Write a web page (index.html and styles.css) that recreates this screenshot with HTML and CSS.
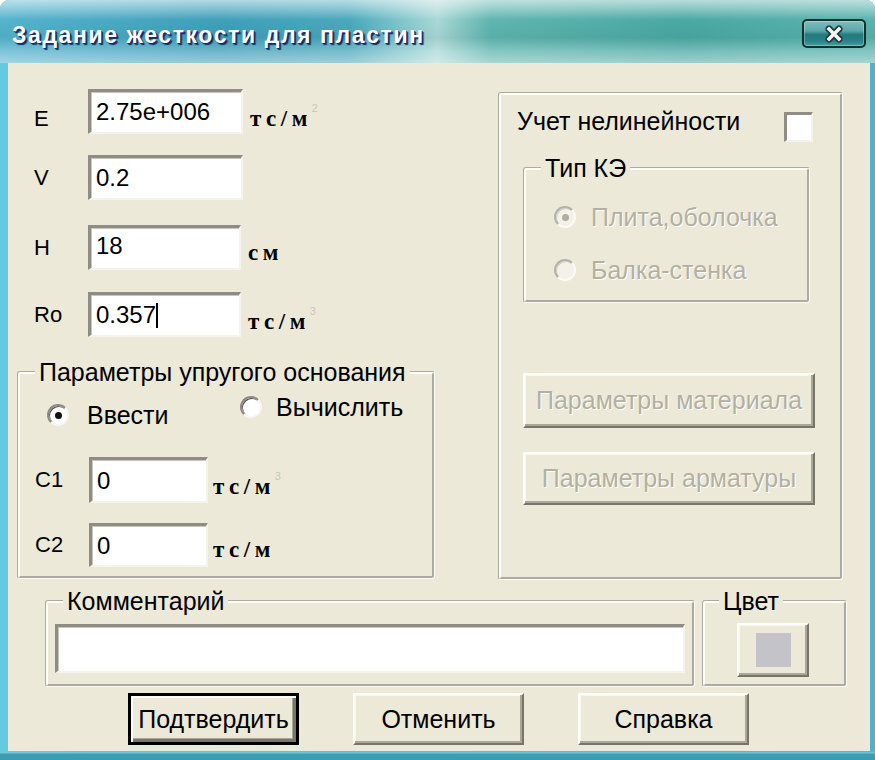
FILE: index.html
```html
<!DOCTYPE html>
<html lang="ru">
<head>
<meta charset="utf-8">
<title>Задание жесткости для пластин</title>
<link rel="stylesheet" href="styles.css">
</head>
<body>
<div class="window">
  <div class="titlebar">
    <span class="title">Задание жесткости для пластин</span>
    <div class="close">
      <svg width="22" height="18" viewBox="0 0 22 18">
        <path d="M6 4 L16 14 M16 4 L6 14" stroke="#1b3b3b" stroke-width="7" stroke-linecap="round"/>
        <path d="M6 4 L16 14 M16 4 L6 14" stroke="#f4f4f4" stroke-width="3.5" stroke-linecap="square"/>
      </svg>
    </div>
  </div>
  <div class="client">
    <div class="top">
      <div class="leftcol">
        <div class="field">
          <span class="lbl le">E</span>
          <div class="edit w155">2.75e+006</div>
          <span class="unit">тс/м<sup>2</sup></span>
        </div>
        <div class="field r2">
          <span class="lbl">V</span>
          <div class="edit w155">0.2</div>
        </div>
        <div class="field r3">
          <span class="lbl">H</span>
          <div class="edit w152 hi">18</div>
          <span class="unit">см</span>
        </div>
        <div class="field r4">
          <span class="lbl">Ro</span>
          <div class="edit w152">0.357<span class="caret"></span></div>
          <span class="unit">тс/м<sup>3</sup></span>
        </div>
        <fieldset class="group elastic">
          <legend>Параметры упругого основания</legend>
          <div class="radios">
            <div class="radio radio-a"><span class="rb checked"></span><span>Ввести</span></div>
            <div class="radio radio-b"><span class="rb"></span><span>Вычислить</span></div>
          </div>
          <div class="field c1">
            <span class="lbl lc">C1</span>
            <div class="edit w119">0</div>
            <span class="unit u2">тс/м<sup>3</sup></span>
          </div>
          <div class="field c2">
            <span class="lbl lc">C2</span>
            <div class="edit w119">0</div>
            <span class="unit u2">тс/м</span>
          </div>
        </fieldset>
      </div>
      <div class="rgroup">
        <div class="checkrow">
          <span>Учет нелинейности</span>
          <span class="checkbox"></span>
        </div>
        <fieldset class="group tipke">
          <legend>Тип КЭ</legend>
          <div class="radio dis first"><span class="rb checked"></span><span>Плита,оболочка</span></div>
          <div class="radio dis second"><span class="rb"></span><span>Балка-стенка</span></div>
        </fieldset>
        <div class="btn dis-btn b1">Параметры материала</div>
        <div class="btn dis-btn b2">Параметры арматуры</div>
      </div>
    </div>
    <div class="bottom">
      <fieldset class="group comment">
        <legend>Комментарий</legend>
        <div class="edit wide"></div>
      </fieldset>
      <fieldset class="group color">
        <legend>Цвет</legend>
        <div class="btn colorbtn"><span class="swatch"></span></div>
      </fieldset>
    </div>
    <div class="buttons">
      <div class="btn default">Подтвердить</div>
      <div class="btn">Отменить</div>
      <div class="btn">Справка</div>
    </div>
  </div>
</div>
</body>
</html>
```
FILE: styles.css
```css
* { box-sizing: border-box; }
html, body { margin: 0; padding: 0; background: #ffffff; }
body { font-family: "Liberation Sans", Arial, sans-serif; color: #000; }

.window {
  width: 875px;
  height: 760px;
  display: flex;
  flex-direction: column;
  border-radius: 9px 9px 0 0;
  overflow: hidden;
  background:
    linear-gradient(0deg, #3a9cb3 0, #3d9fb6 6px, #74c6d6 7px, rgba(116,198,214,0) 9px),
    linear-gradient(90deg, #66c9e2 0%, #58bcd6 40%, #4fb2cb 100%);
}

.titlebar {
  height: 63px;
  flex: none;
  display: flex;
  align-items: flex-start;
  justify-content: space-between;
  padding: 0 9px 0 12px;
  background:
    linear-gradient(180deg, rgba(255,255,255,.6) 0%, rgba(255,255,255,.35) 14%, rgba(255,255,255,0) 32%, rgba(0,0,0,.04) 60%, rgba(255,255,255,.25) 82%, rgba(255,255,255,.45) 100%),
    linear-gradient(90deg, #54b3cc 0%, #3f9fb9 25%, #4aa8bb 40%, #8ccbcf 47%, #a9d8d6 50%, #5fb5b0 56%, #4aa8a3 78%, #5ab3ae 100%);
}

.title {
  margin-top: 22px;
  color: #ffffff;
  font-weight: bold;
  font-size: 23px;
  line-height: 26px;
  letter-spacing: 1.6px;
  text-shadow: 2px 2px 1px #142c66, 1px 1px 0 #1b3a78;
}

.close {
  margin-top: 19px;
  width: 64px;
  height: 29px;
  border: 2px solid #16302f;
  border-radius: 5px;
  background: linear-gradient(180deg, #7fbdbd 0%, #5aa7a9 40%, #23797c 55%, #28848a 80%, #47a0a0 100%);
  box-shadow: inset 0 0 0 1px rgba(255,255,255,.3);
  display: flex;
  align-items: center;
  justify-content: center;
}

.client {
  flex: 1;
  margin: 0 5px 9px 8px;
  background: #ece9d8;
  display: flex;
  flex-direction: column;
}

.top {
  display: flex;
  align-items: flex-start;
  padding-left: 9px;
}

.leftcol {
  width: 418px;
  padding-top: 26px;
  display: flex;
  flex-direction: column;
}

.field {
  display: flex;
  align-items: center;
  height: 45px;
}
.r2 { margin-top: 21px; }
.r3 { margin-top: 25px; }
.r4 { margin-top: 22px; }

.lbl {
  width: 71px;
  padding-left: 17px;
  font-size: 22px;
}
.lbl.le { margin-top: 14px; }
.lbl.lc { width: 69px; padding-left: 15px; }

.edit {
  height: 45px;
  background: #ffffff;
  border-style: solid;
  border-width: 3px 2px 2px 3px;
  border-color: #8f8d83 #f4f3ed #f4f3ed #8f8d83;
  box-shadow: inset 1px 1px 0 #c9c7bb;
  font-size: 24px;
  padding: 0 5px;
  display: flex;
  align-items: center;
}
.edit.hi { align-items: flex-start; padding-top: 4px; }
.w155 { width: 155px; }
.w152 { width: 153px; }
.w119 { width: 119px; height: 46px; }

.caret {
  display: inline-block;
  width: 2px;
  height: 25px;
  background: #000;
}

.unit {
  margin-left: 7px;
  margin-top: 10px;
  font-family: "Liberation Serif", "Times New Roman", serif;
  font-weight: bold;
  font-size: 23px;
  letter-spacing: 4.5px;
}
.unit.u2 { margin-left: 5px; }
.unit sup {
  font-family: "Liberation Sans", Arial, sans-serif;
  font-weight: normal;
  font-size: 11px;
  letter-spacing: 0;
  color: #c9c7bd;
  vertical-align: 14px;
}

.group {
  margin: 0;
  padding: 0;
  min-width: 0;
  border: 3px groove #fffef5;
  border-radius: 3px;
}
.group legend {
  margin-left: 15px;
  padding: 0 4px;
  font-size: 25px;
  line-height: 28px;
}

.elastic {
  margin-top: 21px;
  padding-bottom: 9px;
}

.radios {
  display: flex;
  align-items: flex-start;
  margin-top: 11px;
  height: 26px;
}
.radio {
  display: flex;
  align-items: center;
  font-size: 25px;
  line-height: 28px;
  gap: 18px;
}
.radio-a { margin-left: 27px; width: 193px; margin-top: 4px; }
.radio-b { margin-top: -4px; gap: 14px; }

.rb {
  width: 22px;
  height: 22px;
  flex: none;
  border-radius: 50%;
  background: #ffffff;
  border: 2px solid;
  border-color: #8d8b81 #f7f6f1 #f7f6f1 #8d8b81;
  box-shadow: inset 1px 1px 0 #5b5a53;
  display: flex;
  align-items: center;
  justify-content: center;
}
.rb.checked::after {
  content: "";
  width: 7px;
  height: 7px;
  border-radius: 50%;
  background: #111;
}

.c1 { margin-top: 34px; height: 46px; }
.c2 { margin-top: 20px; height: 44px; }
.c2 .edit { height: 44px; }

.rgroup {
  margin-left: 63px;
  margin-top: 29px;
  width: 345px;
  height: 488px;
  border: 3px groove #fffef5;
  border-radius: 3px;
  padding: 12px 27px 0 16px;
  display: flex;
  flex-direction: column;
}

.checkrow {
  display: flex;
  justify-content: space-between;
  align-items: flex-start;
  font-size: 25px;
  line-height: 28px;
}
.checkbox {
  width: 29px;
  height: 30px;
  margin-top: 5px;
  background: #ffffff;
  border-style: solid;
  border-width: 3px 2px 2px 3px;
  border-color: #8f8d83 #f4f3ed #f4f3ed #8f8d83;
}

.tipke {
  margin-top: 12px;
  margin-left: 6px;
  width: 287px;
  padding-bottom: 17px;
}
.tipke .radio { margin-left: 28px; gap: 15px; }
.tipke .first { margin-top: 22px; height: 26px; }
.tipke .second { margin-top: 27px; height: 26px; }

.radio.dis { color: #b3b0a2; text-shadow: 1px 1px 0 #ffffff; }
.radio.dis .rb {
  background: #f3f1e8;
  border-color: #b5b3a8 #fbfaf6 #fbfaf6 #b5b3a8;
  box-shadow: inset 1px 1px 0 #d2d0c5;
}
.radio.dis .rb.checked::after { background: #b0ad9f; }

.btn {
  display: flex;
  align-items: center;
  justify-content: center;
  background: #ece9d8;
  border: 2px solid;
  border-color: #fdfdf9 #77756a #77756a #fdfdf9;
  box-shadow: inset -2px -2px 0 #a9a798, inset 1px 1px 0 #f6f5ee;
  font-size: 25px;
}
.dis-btn {
  color: #b3b0a2;
  text-shadow: 1px 1px 0 #ffffff;
  margin-left: 6px;
  width: 292px;
}
.b1 { margin-top: 70px; height: 55px; }
.b2 { margin-top: 24px; height: 53px; }

.bottom {
  display: flex;
  gap: 7px;
  margin-top: 7px;
  padding-left: 37px;
}
.comment {
  width: 650px;
  padding-bottom: 11px;
}
.edit.wide {
  width: 630px;
  height: 49px;
  margin: 9px 0 0 7px;
}
.color {
  width: 145px;
  padding-bottom: 7px;
}
.color legend { margin-left: 14px; }
.colorbtn {
  width: 72px;
  height: 54px;
  margin: 8px 0 0 32px;
}
.swatch {
  width: 35px;
  height: 34px;
  background: #c3c3c9;
}

.buttons {
  display: flex;
  gap: 54px;
  padding-left: 120px;
  margin-top: 6px;
}
.buttons .btn {
  width: 171px;
  height: 52px;
}
.btn.default {
  border: 3px solid #000;
  box-shadow: inset 2px 2px 0 #fdfdf9, inset -3px -3px 0 #77756a, inset -4px -4px 0 #a9a798;
}
```
